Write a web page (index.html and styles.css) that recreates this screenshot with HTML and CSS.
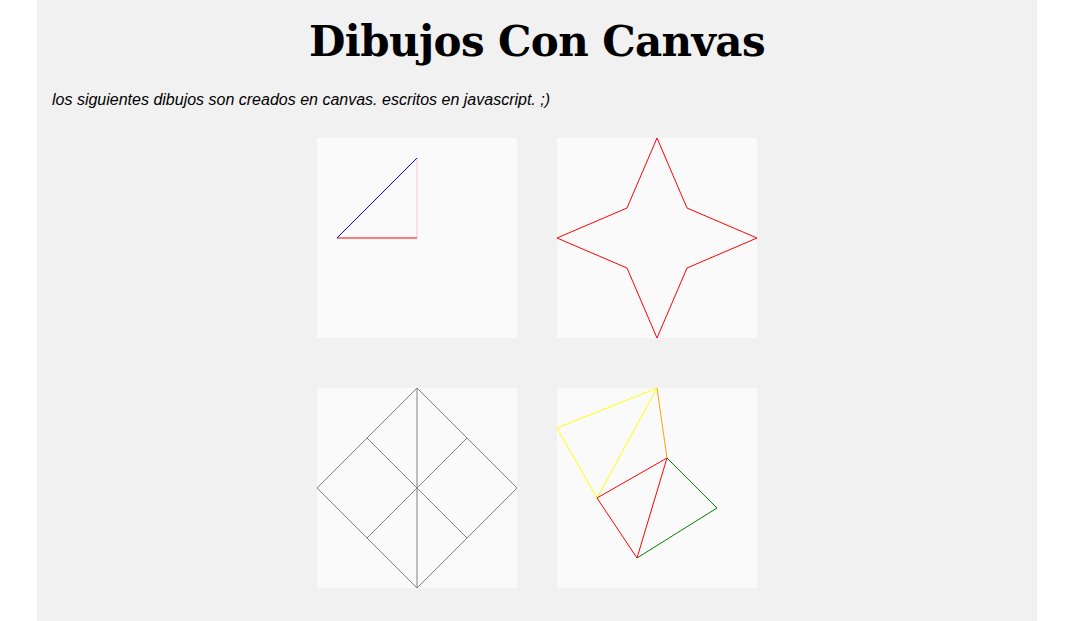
FILE: index.html
```html
<!DOCTYPE html>
<html lang="es">
<head>
<meta charset="utf-8">
<title>Dibujos Con Canvas</title>
<link rel="stylesheet" href="styles.css">
</head>
<body>
<div class="page">
  <h1 class="title">Dibujos Con Canvas</h1>
  <p class="intro">los siguientes dibujos son creados en canvas. escritos en javascript. ;)</p>
  <div class="gallery">
    <canvas id="c1" class="drawing" width="200" height="200"></canvas>
    <canvas id="c2" class="drawing" width="200" height="200"></canvas>
    <canvas id="c3" class="drawing" width="200" height="200"></canvas>
    <canvas id="c4" class="drawing" width="200" height="200"></canvas>
  </div>
</div>
<script src="script.js"></script>
</body>
</html>
```

FILE: styles.css
```css
html, body {
  margin: 0;
  padding: 0;
  background: #ffffff;
}

.page {
  width: 1000px;
  height: 100vh;
  margin-left: 37px;
  padding: 14px 15px 0;
  box-sizing: border-box;
  background: #f1f1f1;
  overflow: hidden;
}

.title {
  margin: 0;
  text-align: center;
  font-family: "DejaVu Serif", "Liberation Serif", serif;
  font-weight: bold;
  font-size: 42px;
  line-height: 56px;
  letter-spacing: -0.6px;
  color: #000;
}

.intro {
  margin: 21px 0 0;
  font-family: "Liberation Sans", Arial, sans-serif;
  font-style: italic;
  font-size: 16px;
  line-height: 18px;
  color: #000;
}

.gallery {
  display: grid;
  grid-template-columns: 200px 200px;
  column-gap: 40px;
  row-gap: 50px;
  justify-content: center;
  margin-top: 29px;
}

.drawing {
  display: block;
  width: 200px;
  height: 200px;
  background: #fafafa;
}
```

FILE: script.js
```js
function line(ctx, pts, color, close) {
  ctx.beginPath();
  ctx.moveTo(pts[0][0], pts[0][1]);
  for (var i = 1; i < pts.length; i++) ctx.lineTo(pts[i][0], pts[i][1]);
  if (close) ctx.closePath();
  ctx.strokeStyle = color;
  ctx.lineWidth = 1;
  ctx.stroke();
}

var c1 = document.getElementById('c1').getContext('2d');
line(c1, [[100, 20], [100, 100]], 'pink');
line(c1, [[20, 100], [100, 100]], 'red');
line(c1, [[20, 100], [100, 20]], 'blue');

var c2 = document.getElementById('c2').getContext('2d');
line(c2, [[100, 0], [130, 70], [200, 100], [130, 130], [100, 200], [70, 130], [0, 100], [70, 70]], 'red', true);

var c3 = document.getElementById('c3').getContext('2d');
line(c3, [[100, 0], [200, 100], [100, 200], [0, 100]], 'gray', true);
line(c3, [[100, 0], [100, 200]], 'gray');
line(c3, [[50, 50], [150, 150]], 'gray');
line(c3, [[150, 50], [50, 150]], 'gray');

var c4 = document.getElementById('c4').getContext('2d');
line(c4, [[100, 0], [0, 40], [40, 110], [100, 0]], 'yellow');
line(c4, [[100, 0], [110, 70]], 'orange');
line(c4, [[110, 70], [160, 120], [80, 170]], 'green');
line(c4, [[40, 110], [110, 70], [80, 170], [40, 110]], 'red');
```
